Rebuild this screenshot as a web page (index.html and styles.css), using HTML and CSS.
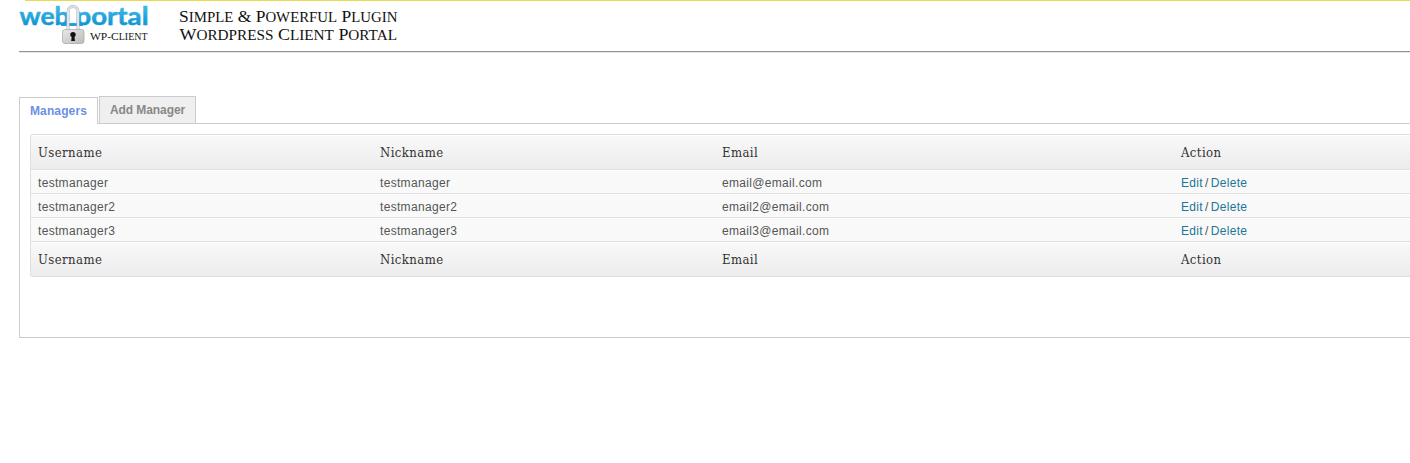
FILE: index.html
```
<!DOCTYPE html>
<html lang="en">
<head>
<meta charset="utf-8">
<title>Managers</title>
<link rel="stylesheet" href="styles.css">
</head>
<body>
<header class="header">
  <svg class="brand" width="390" height="50" viewBox="0 0 390 50">
    <defs>
      <linearGradient id="blue" gradientUnits="userSpaceOnUse" x1="0" y1="6" x2="0" y2="30"><stop offset="0" stop-color="#3fb9ea"/><stop offset="1" stop-color="#078ccb"/></linearGradient>
      <linearGradient id="steel" x1="0" y1="0" x2="1" y2="1"><stop offset="0" stop-color="#e9e9e9"/><stop offset="1" stop-color="#bbb"/></linearGradient>
      <clipPath id="above"><path d="M0 0H140V26H0z"/></clipPath>
    </defs>
    <g class="logo" fill="url(#blue)" stroke="url(#blue)" clip-path="url(#above)">
      <text x="0.5" y="25" textLength="50" lengthAdjust="spacingAndGlyphs">web</text>
      <text x="56.500" y="25" textLength="73" lengthAdjust="spacingAndGlyphs">portal</text>
    </g>
    <path d="M42 24.500H64" stroke="#159bd6" stroke-width="2.800"/>
    <path d="M49 31V12a5 5.500 0 0 1 10 0V31" fill="none" stroke="#aab5bb" stroke-width="3"/>
    <path d="M49 31V12a5 5.500 0 0 1 10 0V31" fill="none" stroke="#dfe4e6" stroke-width="2"/>
    <rect x="43.500" y="29.500" width="21.500" height="14" rx="2.500" fill="url(#steel)" stroke="#a5a5a5" stroke-width=".7"/>
    <circle cx="54" cy="34.600" r="2.700" fill="#111"/><path d="M53 35h2.200l.8 6h-3.800z" fill="#111"/>
    <g class="caps">
      <text x="71" y="40" font-size="11" textLength="57.500" lengthAdjust="spacingAndGlyphs">WP-C<tspan font-size="9.500">LIENT</tspan></text>
      <text x="160" y="22" font-size="16.500" textLength="218.500" lengthAdjust="spacingAndGlyphs">S<tspan class="sm">IMPLE</tspan> &amp; P<tspan class="sm">OWERFUL</tspan> P<tspan class="sm">LUGIN</tspan></text>
      <text x="160.500" y="40" font-size="16.500" textLength="217.500" lengthAdjust="spacingAndGlyphs">W<tspan class="sm">ORDPRESS</tspan> C<tspan class="sm">LIENT</tspan> P<tspan class="sm">ORTAL</tspan></text>
    </g>
  </svg>
</header>
<main>
  <nav class="tabs"><a class="tab active">Managers</a><a class="tab">Add Manager</a></nav>
  <section class="panel">
    <div class="table">
      <div class="row head"><span>Username</span><span>Nickname</span><span>Email</span><span>Action</span></div>
      <div class="row"><span>testmanager</span><span>testmanager</span><span>email@email.com</span><span class="act"><a>Edit</a> / <a>Delete</a></span></div>
      <div class="row"><span>testmanager2</span><span>testmanager2</span><span>email2@email.com</span><span class="act"><a>Edit</a> / <a>Delete</a></span></div>
      <div class="row"><span>testmanager3</span><span>testmanager3</span><span>email3@email.com</span><span class="act"><a>Edit</a> / <a>Delete</a></span></div>
      <div class="row head foot"><span>Username</span><span>Nickname</span><span>Email</span><span>Action</span></div>
    </div>
  </section>
</main>
</body>
</html>
```
FILE: styles.css
```
* { box-sizing: border-box; }
body { margin: 0; padding-left: 19px; height: 463px; overflow: hidden; background: linear-gradient(#e9da55, #e9da55) 25px 0 / 100% 1px no-repeat #fff; font: 12px "Liberation Sans", Arial, sans-serif; color: #555; }
.header { height: 53px; border-bottom: 1px solid #e8e8e8; box-shadow: inset 0 -1px #929292; }
.brand { display: block; }
.logo { font: bold 25px Lato, sans-serif; stroke-width: .5; }
.caps { font-family: "Liberation Serif", serif; fill: #111; }
.sm { font-size: 14px; }
.tabs { display: flex; align-items: flex-end; gap: 1px; margin-top: 43px; height: 28px; }
.tab { height: 28px; padding: 0 10px; border: 1px solid #ccc; background: #efefef; color: #888; font-weight: bold; line-height: 26px; letter-spacing: -.08px; width: 97px; white-space: nowrap; }
.tab.active { width: 79px; height: 27px; border-bottom: 0; background: #fff; color: #6b91e5; letter-spacing: .12px; z-index: 1; }
.panel { margin-top: -1px; height: 215px; padding: 10px 0 0 10px; border: 1px solid #ccc; border-right: 0; }
.table { border: 1px solid #dfdfdf; border-right: 0; border-radius: 3px 0 0 3px; background: #f9f9f9; overflow: hidden; }
.row { display: grid; grid-template-columns: 342px 342px 459px 1fr; height: 24px; padding-left: 7px; border-bottom: 1px solid #dfdfdf; box-shadow: inset 0 1px #fff; line-height: 27px; letter-spacing: .32px; }
.head { height: 35px; background: linear-gradient(#f9f9f9, #ececec); color: #333; font: 13px/36px "DejaVu Serif Condensed", "DejaVu Serif", serif; font-stretch: condensed; letter-spacing: .42px; }
.foot { height: 34px; border: 0; }
.act { word-spacing: -1.500px; letter-spacing: .3px; }
.act a { color: #21759b; }
```
